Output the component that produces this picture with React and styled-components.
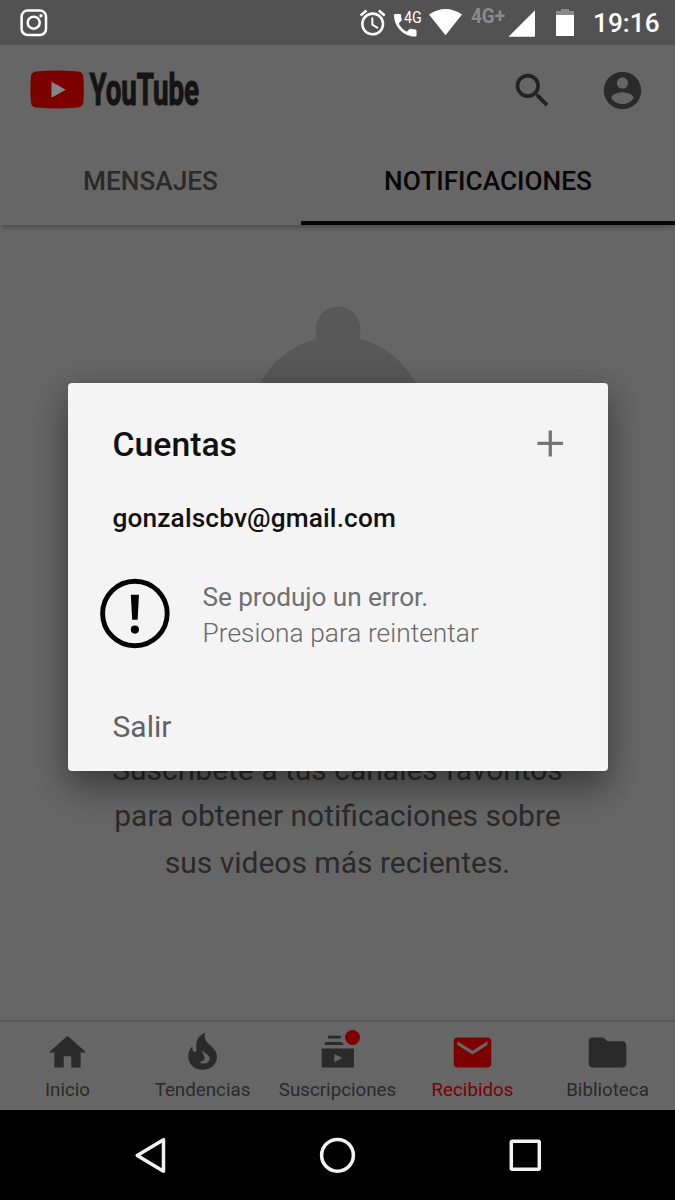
import React from "react";
import styled, { createGlobalStyle } from "styled-components";

const Global = createGlobalStyle`
  *{box-sizing:border-box}
  body{margin:0;background:#000;font-family:Roboto,"Liberation Sans",sans-serif}
  svg{display:block;flex:none}
`;
const ink = "#2a2a2a";
const red = "#7c0000";

const Screen = styled.div`
  position:relative;width:675px;height:1200px;display:flex;flex-direction:column;
  background:#666;overflow:hidden;
`;
const StatusBar = styled.header`
  height:45px;background:#525252;display:flex;align-items:center;
  justify-content:space-between;padding:0 16px 0 20px;color:#fff;flex:none;
`;
const StatusIcons = styled.div`display:flex;align-items:center;height:45px;`;
const Clock = styled.time`
  font-size:26.25px;font-weight:500;line-height:45px;margin-left:19px;
  padding-top:2px;width:66px;white-space:nowrap;
`;
const AppBar = styled.div`
  height:90px;display:flex;align-items:center;justify-content:space-between;
  padding:0 30px;flex:none;
`;
const Actions = styled.div`display:flex;gap:45px;`;
const Tabs = styled.nav`
  height:90px;display:flex;flex:none;
  box-shadow:0 5px 4px -2px rgba(0,0,0,.22);
`;
const Tab = styled.div`
  width:${(p) => p.$width}px;display:flex;align-items:center;justify-content:center;
  font-size:26.25px;font-weight:500;color:${(p) => (p.$active ? "#070707" : ink)};
  background:#666;
  border-bottom:4px solid ${(p) => (p.$active ? "#070707" : "transparent")};
  padding-top:5px;
`;
const Content = styled.main`
  flex:1;display:flex;flex-direction:column;align-items:center;
  justify-content:space-between;padding:81px 0 134px;
`;
const Message = styled.p`
  margin:0;font-size:30px;line-height:46.5px;text-align:center;color:${ink};
  white-space:pre-line;
`;
const BottomNav = styled.nav`
  height:90px;display:flex;flex:none;border-top:2px solid #5a5a5a;
`;
const NavItem = styled.div`
  flex:1 1 0;min-width:0;display:flex;flex-direction:column;align-items:center;
  padding-top:8px;color:${(p) => (p.$active ? red : ink)};
`;
const NavIcon = styled.div`position:relative;width:45px;height:45px;`;
const NavLabel = styled.span`
  font-size:18.75px;line-height:22px;margin-top:4px;white-space:nowrap;
`;
const Badge = styled.i`
  position:absolute;top:0;right:0;width:15px;height:15px;border-radius:50%;
  background:${red};
`;
const SystemBar = styled.footer`
  height:90px;background:#000;display:flex;align-items:center;
  justify-content:center;gap:142.5px;flex:none;
`;
const Overlay = styled.div`
  position:absolute;inset:0;display:flex;justify-content:center;
  align-items:flex-start;padding-top:383px;
`;
const Dialog = styled.section`
  width:540px;height:388px;background:#f4f4f4;border-radius:4px;
  box-shadow:0 20px 34px rgba(0,0,0,.3),0 4px 32px rgba(0,0,0,.2);
  display:flex;flex-direction:column;
`;
const DialogHeader = styled.div`
  display:flex;justify-content:space-between;align-items:center;
  height:45px;margin:38px 35px 0 45px;
`;
const Title = styled.h1`
  margin:0;font-size:33.75px;line-height:45px;font-weight:500;color:#111;padding-top:2px;
`;
const Account = styled.div`
  margin:36px 45px 0;font-size:26.25px;line-height:32px;font-weight:500;color:#111;
  letter-spacing:.13px;
`;
const ErrorRow = styled.div`
  display:flex;align-items:center;margin:42px 0 0 32px;height:75px;gap:32px;
`;
const ErrorText = styled.div`
  font-size:26.25px;line-height:36px;color:#707070;padding-top:2px;letter-spacing:-.1px;
`;
const Retry = styled.div`font-weight:300;color:#686868;letter-spacing:.06px;`;
const SignOut = styled.div`
  margin:56px 45px 0;font-size:30px;line-height:40px;color:#626262;
`;

const Glyph = ({ d, size = 45, color = "currentColor" }) => (
  <svg width={size} height={size} viewBox="0 0 24 24" fill={color}><path d={d} /></svg>
);

const paths = {
  search: "M15.5 14h-.79l-.28-.27A6.47 6.47 0 0 0 16 9.5 6.5 6.5 0 1 0 9.5 16c1.61 0 3.09-.59 4.23-1.57l.27.28v.79l5 4.99L20.49 19l-4.99-5zm-6 0C7.01 14 5 11.99 5 9.5S7.01 5 9.5 5 14 7.01 14 9.5 11.99 14 9.5 14z",
  account: "M12 2C6.48 2 2 6.48 2 12s4.48 10 10 10 10-4.48 10-10S17.52 2 12 2zm0 3c1.66 0 3 1.34 3 3s-1.34 3-3 3-3-1.34-3-3 1.34-3 3-3zm0 14.2c-2.5 0-4.71-1.28-6-3.22.03-1.99 4-3.08 6-3.08 1.99 0 5.97 1.09 6 3.08-1.29 1.94-3.5 3.22-6 3.22z",
  home: "M10 20v-6h4v6h5v-8h3L12 3 2 12h3v8z",
  mail: "M20 4H4c-1.1 0-1.99.9-1.99 2L2 18c0 1.1.9 2 2 2h16c1.1 0 2-.9 2-2V6c0-1.1-.9-2-2-2zm0 4l-8 5-8-5V6l8 5 8-5v2z",
  folder: "M10 4H4c-1.1 0-1.99.9-1.99 2L2 18c0 1.1.9 2 2 2h16c1.1 0 2-.9 2-2V8c0-1.1-.9-2-2-2h-8l-2-2z",
  alarm: "M22 5.72l-4.6-3.86-1.29 1.53 4.6 3.86L22 5.72zM7.88 3.39L6.6 1.86 2 5.71l1.29 1.53 4.59-3.85zM12.5 8H11v6l4.75 2.85.75-1.23-4-2.37V8zM12 4c-4.97 0-9 4.03-9 9s4.02 9 9 9a9 9 0 0 0 0-18zm0 16c-3.87 0-7-3.13-7-7s3.13-7 7-7 7 3.13 7 7-3.13 7-7 7z",
  phone: "M20.01 15.38c-1.23 0-2.42-.2-3.53-.56-.35-.12-.74-.03-1.01.24l-2.2 2.2c-2.83-1.44-5.15-3.75-6.59-6.59l2.2-2.2c.28-.27.36-.66.25-1.01-.37-1.11-.56-2.3-.56-3.53 0-.54-.45-.99-.99-.99H4c-.55 0-1 .45-1 1C3 13.28 10.73 21 20.01 21c.55 0 .99-.45.99-1v-3.630c0-.54-.45-.99-.99-.99z",
};

const Logo = () => (
  <svg width="184" height="64" viewBox="0 -10 184 64">
    <path d="M6 3.6Q27 1.4 48 3.6Q52.5 4 53.3 8.5Q54.4 21.5 53.3 34.5Q52.5 39 48 39.5Q27 41.5 6 39.5Q1.6 39 .9 34.5Q-.1 21.5.9 8.5Q1.6 4 6 3.6Z" fill={red} />
    <path d="M21.5 13.8 35.8 21.8 21.5 29.8Z" fill="#868686" />
    <text x="59.5" y="37" fontFamily="Roboto" fontWeight="700" fontSize="44" textLength="109.5" lengthAdjust="spacingAndGlyphs" fill="#141414" stroke="#141414" strokeWidth="1.2">YouTube</text>
  </svg>
);

const StatusGlyphs = () => (
  <svg width="216" height="45" viewBox="358 0 216 45" fill="#fff">
    <g transform="translate(357.2 7.2) scale(1.29)"><path d={paths.alarm} /></g>
    <g transform="translate(390.3 10.2) scale(1.25)"><path d={paths.phone} /></g>
    <text x="404" y="23" fontFamily="Roboto" fontSize="16.2" textLength="17.8" lengthAdjust="spacingAndGlyphs">4G</text>
    <path d="M429 14.5Q445.500 3.500 462 14.500L445.500 35.200Z" />
    <text x="471" y="22.600" fontFamily="Roboto" fontWeight="700" fontSize="20.500" textLength="34" lengthAdjust="spacingAndGlyphs" fill="#8b8b8b">4G+</text>
    <path d="M508.500 36.700 535 10.300V36.700Z" />
    <path d="M556 15V11h5V9h8v2h5v4z" fill="#8b8b8b" />
    <path d="M556 15h18v21h-18z" />
  </svg>
);

const Instagram = () => (
  <svg width="28" height="28" viewBox="0 0 28 28" fill="none" stroke="#fff">
    <rect x="1.6" y="1.600" width="24.400" height="24.400" rx="6" strokeWidth="2.500" />
    <circle cx="13.700" cy="13.700" r="6" strokeWidth="2.500" />
    <circle cx="21" cy="6.700" r="1.700" fill="#fff" stroke="none" />
  </svg>
);

const Bell = () => (
  <svg width="180" height="160" viewBox="0 0 180 160" fill="#585858">
    <path d="M67.800 33V22.700a22.200 22.200 0 0 1 44.400 0V33A87.500 87.500 0 0 1 177.500 118V160H2.500V118A87.500 87.500 0 0 1 67.800 33Z" />
  </svg>
);

const Fire = () => (
  <svg width="45" height="45" viewBox="0 0 45 45" fill="currentColor">
    <path fillRule="evenodd" d="M25.200 2.500C19 5.200 15.800 10.500 16.200 16.500C16.300 18.800 17 20.500 15.800 21.500C13.800 23 11.900 20.500 12.400 16.300C9.200 19.500 8 23.500 8.300 27.500C9 35 15 39.800 22.600 39.800C30.800 39.800 37 34.300 37 27C37 18.500 30 16.500 26.500 11.500C24.600 8.800 24.300 5.500 25.200 2.500ZM22.800 19.800C23 23.500 29.600 24.500 29.600 28.500C29.600 32 26 34.300 21.500 33.300C20.500 33 19.600 32.500 19.200 31.800C22 32 24.600 30.500 24.600 27.700C24.600 25 21.500 23.500 22.800 19.800Z" />
  </svg>
);

const Subscriptions = () => (
  <svg width="45" height="45" viewBox="0 0 45 45" fill="currentColor">
    <path d="M13 5.700h12.800v2.900H13zM9.800 12h16.800l2.600 3.100H9.800z" />
    <path fillRule="evenodd" d="M6.700 18.400h32.200v19.200H6.700zM19.300 23.900v8.400l8-4.200z" />
  </svg>
);

export default function App() {
  return (
    <Screen>
      <Global />
      <StatusBar>
        <Instagram />
        <StatusIcons><StatusGlyphs /><Clock>19:16</Clock></StatusIcons>
      </StatusBar>
      <AppBar>
        <Logo />
        <Actions><Glyph d={paths.search} color="#222" /><Glyph d={paths.account} color={ink} /></Actions>
      </AppBar>
      <Tabs>
        <Tab $width={301}>MENSAJES</Tab>
        <Tab $width={374} $active>NOTIFICACIONES</Tab>
      </Tabs>
      <Content>
        <Bell />
        <Message>{"Suscríbete a tus canales favoritos\npara obtener notificaciones sobre\nsus videos más recientes."}</Message>
      </Content>
      <BottomNav>
        <NavItem><NavIcon><Glyph d={paths.home} /></NavIcon><NavLabel>Inicio</NavLabel></NavItem>
        <NavItem><NavIcon><Fire /></NavIcon><NavLabel>Tendencias</NavLabel></NavItem>
        <NavItem><NavIcon><Subscriptions /><Badge /></NavIcon><NavLabel>Suscripciones</NavLabel></NavItem>
        <NavItem $active><NavIcon><Glyph d={paths.mail} /></NavIcon><NavLabel>Recibidos</NavLabel></NavItem>
        <NavItem><NavIcon><Glyph d={paths.folder} /></NavIcon><NavLabel>Biblioteca</NavLabel></NavItem>
      </BottomNav>
      <SystemBar>
        <svg width="45" height="45" viewBox="0 0 45 45" fill="none" stroke="#f2f2f2" strokeWidth="3.500" strokeLinejoin="round"><path d="M9.200 22.500 35.500 6.700V38.300Z" /></svg>
        <svg width="45" height="45" viewBox="0 0 45 45" fill="none" stroke="#f2f2f2" strokeWidth="3.500"><circle cx="22.500" cy="22.300" r="15.900" /></svg>
        <svg width="45" height="45" viewBox="0 0 45 45" fill="none" stroke="#f2f2f2" strokeWidth="3.500" strokeLinejoin="round"><rect x="8.300" y="8.300" width="28" height="28" rx="1" /></svg>
      </SystemBar>
      <Overlay>
        <Dialog>
          <DialogHeader>
            <Title>Cuentas</Title>
            <Glyph d="M18.700 12.800h-5.950v6.100h-1.750v-6.100H5v-1.750h6V5h1.750v6.050h5.950z" color="#757575" />
          </DialogHeader>
          <Account>gonzalscbv@gmail.com</Account>
          <ErrorRow>
            <svg width="71" height="71" viewBox="0 0 71 71">
              <circle cx="34.900" cy="35.500" r="32.300" fill="none" stroke="#050505" strokeWidth="4.900" />
              <path d="M30.800 16.800h8.200l-1.400 25h-5.400z" fill="#050505" /><circle cx="34.900" cy="51.600" r="4.100" fill="#050505" />
            </svg>
            <ErrorText>Se produjo un error.<Retry>Presiona para reintentar</Retry></ErrorText>
          </ErrorRow>
          <SignOut>Salir</SignOut>
        </Dialog>
      </Overlay>
    </Screen>
  );
}
